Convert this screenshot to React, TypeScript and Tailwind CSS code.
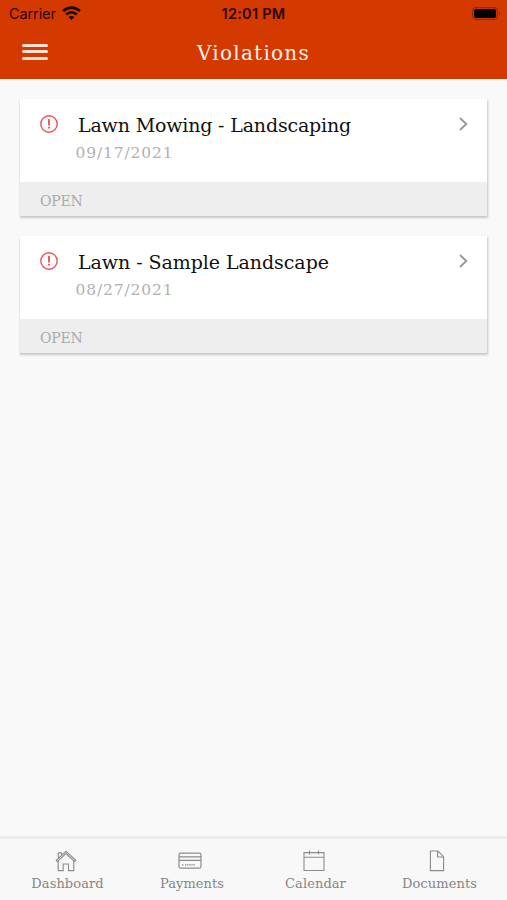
import React from "react";

interface Violation {
  title: string;
  date: string;
  status: string;
  titleClass: string;
}

const violations: Violation[] = [
  {
    title: "Lawn Mowing - Landscaping",
    date: "09/17/2021",
    status: "OPEN",
    titleClass: "tracking-[-0.17px]",
  },
  {
    title: "Lawn - Sample Landscape",
    date: "08/27/2021",
    status: "OPEN",
    titleClass: "tracking-[-0.06px]",
  },
];

const serif = "font-['DejaVu_Serif','Liberation_Serif',serif]";

const StatusBar: React.FC = () => (
  <div className="h-7 grid grid-cols-3 items-center px-[9px] font-['Inter',sans-serif] text-[#2b0800]">
    <div className="flex items-center gap-[6px]">
      <span className="text-[14.5px] leading-7 tracking-[-0.1px]">Carrier</span>
      <svg className="-mt-[2px]" width="19" height="15" viewBox="0 0 19 15" fill="none" stroke="#160300" strokeWidth="2.7">
        <path d="M1.2 5.1C6 0.5 13 0.5 17.8 5.1" />
        <path d="M4.2 8.5C7.3 5.6 11.7 5.6 14.8 8.5" />
        <path d="M9.5 14L6.6 11.1C8.2 9.6 10.8 9.6 12.4 11.1Z" fill="#160300" stroke="none" />
      </svg>
    </div>
    <span className="text-center text-[14.5px] leading-7 font-semibold tracking-[0.25px]">12:01 PM</span>
    <svg className="justify-self-end -mr-[3px] -mt-[2px]" width="29" height="13" viewBox="0 0 29 13">
      <rect x="0.6" y="0.6" width="24.8" height="11.8" rx="3.4" fill="none" stroke="#982600" strokeWidth="1.1" />
      <rect x="2" y="2" width="22" height="9" rx="2" fill="#000" />
      <path d="M27 4.4C28.6 5 28.6 8 27 8.6Z" fill="#982600" />
    </svg>
  </div>
);

const Header: React.FC = () => (
  <header className="h-[79px] bg-[#d43900]">
    <StatusBar />
    <div className="h-[51px] grid grid-cols-3 items-center px-[22px]">
      <button type="button" aria-label="Menu" className="w-[26px] flex flex-col gap-[3.5px] pb-[4px]">
        <span className="h-[3px] w-full rounded-full bg-[#ffe0d4]" />
        <span className="h-[3px] w-full rounded-full bg-[#ffe0d4]" />
        <span className="h-[3px] w-full rounded-full bg-[#ffe0d4]" />
      </button>
      <h1 className="text-center text-[20px] leading-6 pb-[2px] tracking-[1.25px] text-[#fff3ee]">Violations</h1>
    </div>
  </header>
);

const ViolationCard: React.FC<{ item: Violation }> = ({ item }) => (
  <article className="bg-white shadow-[0_1px_2px_0.5px_rgba(0,0,0,0.2)]">
    <div className="h-[83px] flex px-[19px] pl-5">
      <svg className="mt-4 shrink-0" width="18" height="18" viewBox="0 0 18 18" fill="none" stroke="#f0525a">
        <circle cx="9" cy="9" r="8.2" strokeWidth="1.4" />
        <path d="M9 4V10.4" strokeWidth="1.9" />
        <path d="M9 11.7V13.6" strokeWidth="1.9" />
      </svg>
      <div className="flex-1 pt-[14px]">
        <h2 className={`ml-5 text-[19px] leading-6 whitespace-nowrap text-[#111] ${item.titleClass}`}>{item.title}</h2>
        <p className="ml-[17.5px] mt-[6px] text-[15.5px] leading-5 tracking-[0.85px] text-[#b0b0b0]">{item.date}</p>
      </div>
      <svg className="mt-[18px] shrink-0" width="9" height="14" viewBox="0 0 9 14" fill="none" stroke="#999" strokeWidth="1.9">
        <path d="M1 1L7.3 7L1 13" />
      </svg>
    </div>
    <div className="h-[34px] bg-[#eee] pl-5 pt-[9px] text-[14px] leading-5 tracking-[-0.2px] text-[#aaa]">{item.status}</div>
  </article>
);

const HomeIcon = () => (
  <svg width="22" height="22" viewBox="0 0 22 22" fill="none" stroke="#8c8c8c" strokeWidth="1.1">
    <path d="M1.2 10.4L11 1.3L20.8 10.4L19.8 11.6L11 3.6L2.2 11.6Z" />
    <path d="M3.2 10.8V20.6H8.2V14H13.5V20.6H18.8V10.8" />
    <path d="M3.3 8V2.9H6.5V5" />
  </svg>
);

const CardIcon = () => (
  <svg width="24" height="22" viewBox="0 0 24 22" fill="none" stroke="#8c8c8c" strokeWidth="1.2">
    <rect x="1" y="3.2" width="22" height="15" rx="1.8" />
    <path d="M1 6.8H23M1 10.3H23" />
    <path d="M4 14.8H5.5M7 14.8H17" strokeDasharray="1.5 0.6" />
  </svg>
);

const CalendarIcon = () => (
  <svg width="22" height="22" viewBox="0 0 22 22" fill="none" stroke="#8c8c8c" strokeWidth="1.1">
    <path d="M1 2.6H21V20.5H1Z" />
    <path d="M1 7.2H21M6.5 0.5V4.5M15.5 0.5V4.5" />
  </svg>
);

const DocumentIcon = () => (
  <svg width="16" height="22" viewBox="0 0 16 22" fill="none" stroke="#8c8c8c" strokeWidth="1.1">
    <path d="M1.4 1H9L14.6 6.7V20.6H1.4Z" />
    <path d="M8.6 1V7H14.6" />
  </svg>
);

const tabs = [
  { label: "Dashboard", Icon: HomeIcon, place: "w-[131px] pl-[4px]", iconClass: "-ml-[4px]" },
  { label: "Payments", Icon: CardIcon, place: "w-[122px]", iconClass: "-ml-[5px]" },
  { label: "Calendar", Icon: CalendarIcon, place: "w-[125px]", iconClass: "-ml-[3px]" },
  { label: "Documents", Icon: DocumentIcon, place: "w-[123px]", iconClass: "-ml-[5px]" },
];

const TabBar: React.FC = () => (
  <nav className="h-[64px] flex border-t-[3px] border-[#ececec] bg-[#f8f8f8]">
    {tabs.map(({ label, Icon, place, iconClass }) => (
      <a key={label} className={`flex flex-col items-center pt-[11px] shrink-0 ${place}`}>
        <span className={`h-[22px] ${iconClass}`}>
          <Icon />
        </span>
        <span className="mt-[4px] text-[13px] leading-4 tracking-[0.08px] text-[#858585]">{label}</span>
      </a>
    ))}
  </nav>
);

const App: React.FC = () => {
  return (
    <div className={`w-[507px] h-[900px] flex flex-col overflow-hidden bg-[#f9f9f9] ${serif}`}>
      <Header />
      <main className="flex-1 px-5 pt-5 flex flex-col gap-5">
        {violations.map((item) => (
          <ViolationCard key={item.title} item={item} />
        ))}
      </main>
      <TabBar />
    </div>
  );
};

export default App;
